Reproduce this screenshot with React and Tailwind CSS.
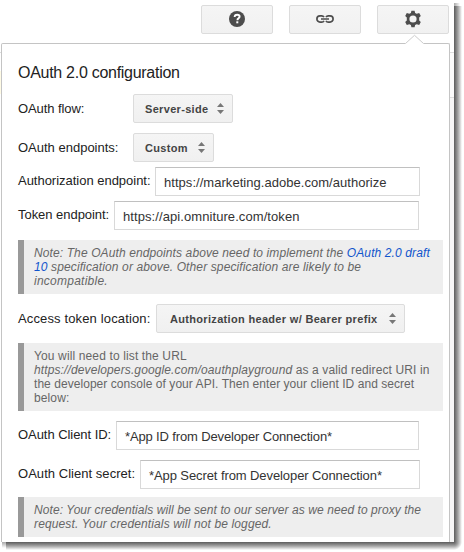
import React from 'react';

function ToolButton({ label, children }) {
  return (
    <button
      aria-label={label}
      className="flex h-[29px] w-[72px] items-center justify-center rounded-[2px] border border-[#dcdcdc] bg-linear-to-b from-[#f5f5f5] to-[#f1f1f1] pb-[2px]"
    >
      {children}
    </button>
  );
}

function Select({ className, children }) {
  return (
    <button
      className={
        'flex h-[29px] items-center justify-between rounded-[2px] border border-[#dcdcdc] bg-linear-to-b from-[#f5f5f5] to-[#f0f0f0] pr-[8px] text-[11px] font-bold tracking-[0.32px] text-[#444] ' +
        className
      }
    >
      <span className="whitespace-nowrap">{children}</span>
      <svg width="7" height="11" viewBox="0 0 7 11" fill="#777">
        <path d="M3.5 0L7 4H0zM0 7h7l-3.5 4z" />
      </svg>
    </button>
  );
}

function Field({ className, children }) {
  return (
    <div
      className={
        'flex h-[29px] items-center whitespace-nowrap border border-[#d9d9d9] border-t-[#c0c0c0] pt-[2px] pl-[8px] text-[#333] ' +
        className
      }
    >
      {children}
    </div>
  );
}

function Row({ className, children }) {
  return <div className={'flex h-[29px] items-center ' + className}>{children}</div>;
}

function Label({ className, children }) {
  return <div className={'shrink-0 whitespace-nowrap ' + className}>{children}</div>;
}

function Note({ className, children }) {
  return (
    <div
      className={
        'w-[425px] border-l-[6px] border-[#999] bg-[#eee] pt-[6px] pl-[10px] text-[12px] leading-[14px] whitespace-nowrap text-[#666] ' +
        className
      }
    >
      {children}
    </div>
  );
}

export default function App() {
  return (
    <div className="h-[552px] w-[464px] overflow-hidden bg-white font-['Liberation_Sans',Arial,sans-serif] text-[13px] leading-[16px] text-[#222]">
      <div className="relative h-[542px] w-[454px] bg-white">
        <div className="absolute top-[6px] left-[454px] h-[536px] w-[8px] bg-linear-to-r from-[#5c5c5c] via-[#a4a4a4] to-white" />
        <div className="absolute top-[3px] left-[454px] h-[3px] w-[6px] bg-linear-to-r from-[#aaa] to-white" />
        <div className="absolute top-[542px] left-[6px] h-[8px] w-[448px] bg-linear-to-b from-[#5c5c5c] via-[#a4a4a4] to-white" />
        <div className="absolute top-[542px] left-[2px] h-[6px] w-[4px] bg-linear-to-b from-[#aaa] to-white" />
        <div className="absolute top-[542px] left-[454px] size-[8px] bg-[radial-gradient(circle_8px_at_top_left,#5c5c5c,#a4a4a4_50%,#fff_100%)]" />
        <div className="absolute top-[52px] left-0 h-px w-px bg-[#ddd]" />
        <div className="absolute top-[71px] left-0 h-[23px] w-px bg-[#fffbe5]" />
        <div className="absolute top-[52px] left-[450px] h-[46px] w-[4px] border-y border-[#ddd] bg-[#fbfbfb]" />
        <div className="absolute top-[98px] left-[450px] h-[444px] w-[4px] bg-[#f6f6f6]" />

        <div className="flex h-[43px] gap-[16px] pt-[5px] pl-[201px]">
          <ToolButton label="Help">
            <svg width="16" height="16" viewBox="0 0 16 16">
              <circle cx="8" cy="8" r="8" fill="#4d4d4d" />
              <path d="M5.7 6.1V5.4q.3-1.7 2.5-1.7 2.4 0 2.4 1.8 0 1-1.1 1.8-1.1.6-1.1 1.9" fill="none" stroke="#fff" strokeWidth="1.9" />
              <path d="M7.3 10.3h2v2h-2z" fill="#fff" />
            </svg>
          </ToolButton>
          <ToolButton label="Link">
            <svg width="18" height="8" viewBox="0 0 18 8" fill="none" stroke="#4d4d4d" strokeWidth="1.7">
              <path d="M8 2.2Q7.3.9 5.7.9H4a3.1 3.1 0 0 0 0 6.2h1.7Q7.3 7.1 8 5.8M10 2.2Q10.7.9 12.3.9H14a3.1 3.1 0 0 1 0 6.2h-1.7Q10.7 7.1 10 5.8M5 4h8" />
            </svg>
          </ToolButton>
          <ToolButton label="Settings">
            <svg width="16" height="18" viewBox="0 0 16 18">
              <path
                fill="#4d4d4d"
                fillRule="evenodd"
                d="M6.4.7h3.2l.5 2.2 1.6.9 2.5-.7 1.6 2.8L14.2 7.6v2.8l1.6 1.7-1.6 2.8-2.5-.7-1.6.9-.5 2.2H6.4l-.5-2.2-1.6-.9-2.5.7L.2 12.1l1.6-1.7V7.6L.2 5.9l1.6-2.8 2.5.7 1.6-.9zM8 5.4a3.6 3.6 0 1 0 0 7.2 3.6 3.6 0 0 0 0-7.2z"
              />
            </svg>
          </ToolButton>
        </div>

        <svg className="absolute top-[34px] left-[405px] z-10" width="19" height="10" viewBox="0 0 19 10">
          <path d="M0 10L9.5 1 19 10z" fill="#fff" />
          <path d="M.5 9.5L9.5 1.3l9 8.2" fill="none" stroke="#ccc" />
        </svg>

        <main className="ml-px flex h-[499px] w-[449px] flex-col rounded-t-[2px] border border-b-0 border-[#c4c4c4] bg-white pl-[16px]">
          <h1 className="mt-[19px] h-[20px] text-[16px] leading-[20px] tracking-[-0.28px]">OAuth 2.0 configuration</h1>
          <Row className="mt-[11px]">
            <Label className="w-[115px] tracking-[-0.08px]">OAuth flow:</Label>
            <Select className="w-[100px] pl-[11px]">Server-side</Select>
          </Row>
          <Row className="mt-[10px]">
            <Label className="w-[115px]">OAuth endpoints:</Label>
            <Select className="w-[81px] pl-[11px]">Custom</Select>
          </Row>
          <Row className="mt-[5px]">
            <Label className="w-[137px] pb-[2px] tracking-[-0.02px]">Authorization endpoint:</Label>
            <Field className="w-[265px] tracking-[0.04px]">https://marketing.adobe.com/authorize</Field>
          </Row>
          <Row className="mt-[5px]">
            <Label className="w-[96px] pb-[2px] tracking-[-0.04px]">Token endpoint:</Label>
            <Field className="w-[305px] tracking-[0.08px]">https://api.omniture.com/token</Field>
          </Row>
          <Note className="mt-[10px] h-[54px] italic">
            <p className="tracking-[0.11px]">
              Note: The OAuth endpoints above need to implement the <a className="text-[#15c]">OAuth 2.0 draft</a>
            </p>
            <p className="tracking-[0.12px]">
              <a className="text-[#15c]">10</a> specification or above. Other specification are likely to be
            </p>
            <p className="tracking-[0.25px]">incompatible.</p>
          </Note>
          <Row className="mt-[10px]">
            <Label className="w-[138px] tracking-[0.14px]">Access token location:</Label>
            <Select className="w-[249px] pl-[13px]">Authorization header w/ Bearer prefix</Select>
          </Row>
          <Note className="mt-[10px] h-[68px]">
            <p className="tracking-[0.13px]">You will need to list the URL</p>
            <p className="tracking-[0.12px]">
              <i>https://developers.google.com/oauthplayground</i> as a valid redirect URI in
            </p>
            <p className="tracking-[0.05px]">the developer console of your API. Then enter your client ID and secret</p>
            <p className="tracking-[0.12px]">below:</p>
          </Note>
          <Row className="mt-[10px]">
            <Label className="w-[98px] pb-[2px] tracking-[-0.05px]">OAuth Client ID:</Label>
            <Field className="w-[303px] tracking-[-0.14px]">*App ID from Developer Connection*</Field>
          </Row>
          <Row className="mt-[10px]">
            <Label className="w-[122px] pb-[2px] tracking-[0.04px]">OAuth Client secret:</Label>
            <Field className="w-[280px] tracking-[-0.09px]">*App Secret from Developer Connection*</Field>
          </Row>
          <Note className="mt-[8px] h-[40px] italic">
            <p className="tracking-[0.07px]">Note: Your credentials will be sent to our server as we need to proxy the</p>
            <p className="tracking-[0.13px]">request. Your credentials will not be logged.</p>
          </Note>
        </main>
      </div>
    </div>
  );
}
